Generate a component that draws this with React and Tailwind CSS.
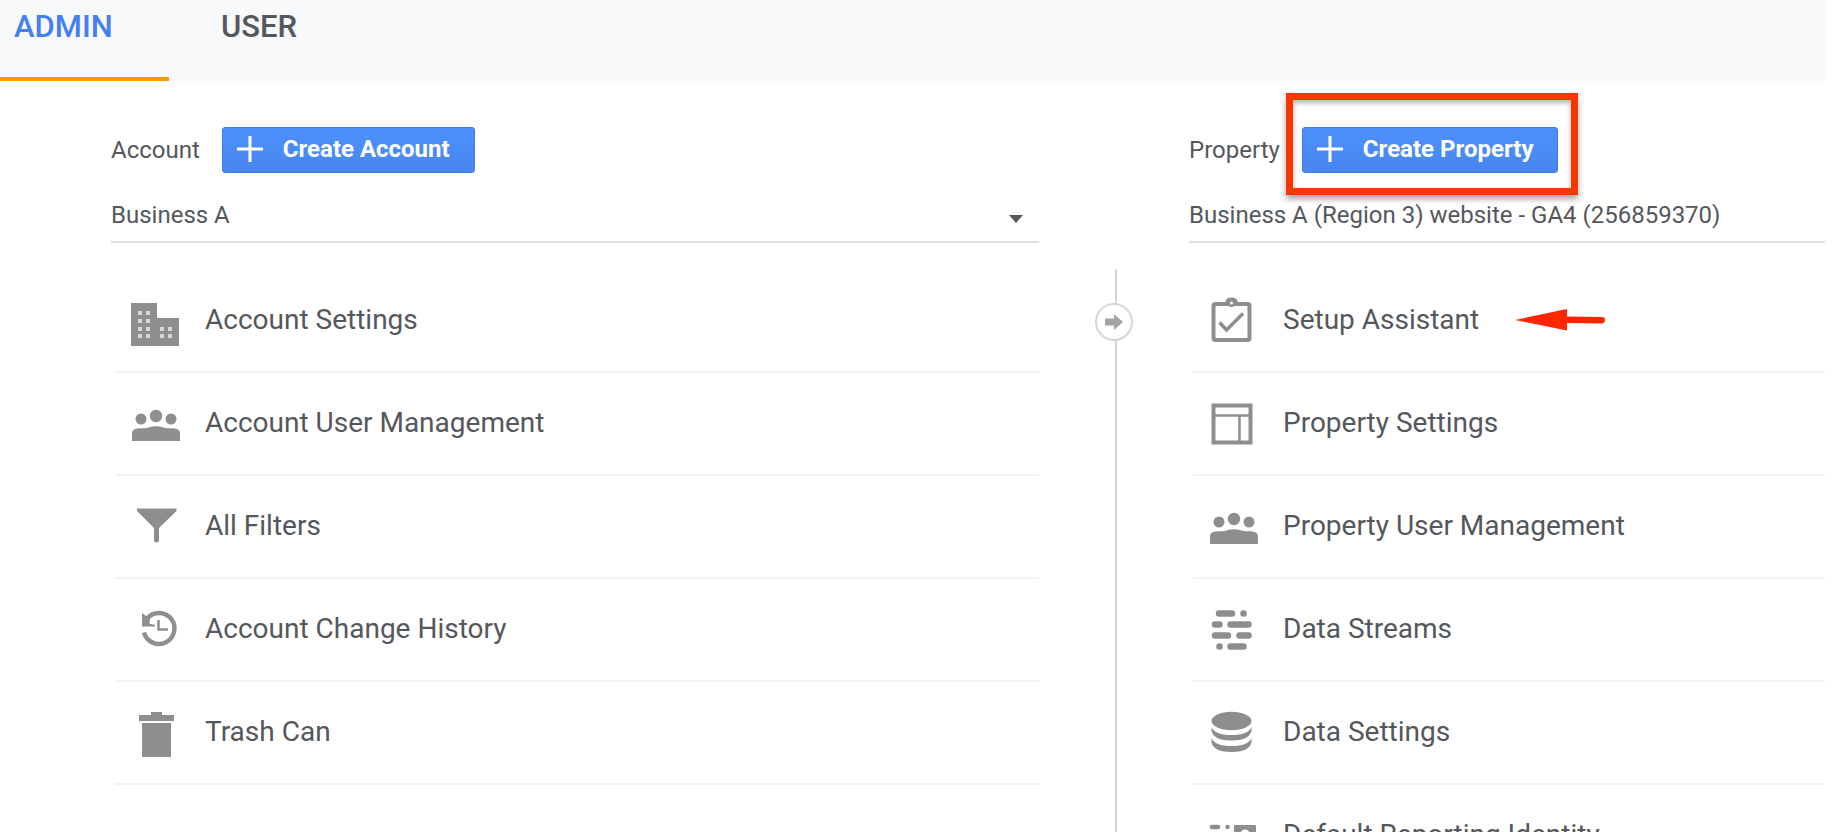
import React from 'react';

const ICONS = {
    building: (
        <svg viewBox="0 0 60 60" className="size-[60px]" fill="#8e8e8e">
            <path fill="#d6d6d6" d="M10 19H28V50H10ZM32 34H50V50H32Z" />
            <path fillRule="evenodd" d="M6 13H32V28H54V56H6ZM13 21v4h4v-4zM21 21v4h4v-4zM13 29v4h4v-4zM21 29v4h4v-4zM13 37v4h4v-4zM21 37v4h4v-4zM13 44v4h4v-4zM21 44v4h4v-4zM35 37v4h4v-4zM43 37v4h4v-4zM35 44v4h4v-4zM43 44v4h4v-4z" />
        </svg>
    ),
    people: (
        <svg viewBox="0 0 60 60" className="size-[60px]" fill="#8e8e8e">
            <circle cx="16" cy="26" r="5.5" />
            <circle cx="31" cy="23" r="6.2" />
            <circle cx="46" cy="26" r="5.5" />
            <path d="M7 48V40Q7 35 17 35.300Q22 35.500 24 34.300Q31 32 38 34.300Q40 35.500 45 35.300Q55 35 55 40V48Z" />
        </svg>
    ),
    filter: (
        <svg viewBox="0 0 60 60" className="size-[60px]" fill="#8e8e8e">
            <path d="M12 12.500H51.500V15L34 32V45Q31.500 48 29 45V32L12 15Z" />
        </svg>
    ),
    history: (
        <svg viewBox="0 0 60 60" className="size-[60px]" fill="none" stroke="#8e8e8e">
            <path strokeWidth="4.500" d="M19 33.500A15.500 15.500 0 1 0 22 19.500" />
            <path fill="#8e8e8e" stroke="none" d="M17 14L21 17L25 20.500L24.500 24.500L30 26V27.500H17Z" />
            <path strokeWidth="2.500" d="M33.500 21V30.500H43" />
        </svg>
    ),
    trash: (
        <svg viewBox="0 0 60 60" className="size-[60px]" fill="#8e8e8e">
            <path d="M14 13H26V10H37V13H49V19H14ZM17 21H46V55H17Z" />
        </svg>
    ),
    clipboard: (
        <svg viewBox="3 0 60 60" className="size-[60px]" fill="none" stroke="#8e8e8e">
            <rect x="13.500" y="14" width="36" height="36" rx="2" strokeWidth="4" />
            <path strokeWidth="3" d="M26.500 13Q27 9 31.500 9Q36 9 36.500 13" />
            <circle cx="31.500" cy="13" r="4" fill="#8e8e8e" stroke="none" />
            <circle cx="31.500" cy="13" r="1.500" fill="#fff" stroke="none" />
            <path strokeWidth="3.500" d="M19.500 32.500L26.500 40L43 23.500" />
        </svg>
    ),
    layout: (
        <svg viewBox="3 0 60 60" className="size-[60px]" fill="none" stroke="#8e8e8e">
            <rect x="13.500" y="12.500" width="37" height="37" strokeWidth="4" />
            <path strokeWidth="2.500" d="M13 22.500H50M39.500 22.500V50" />
        </svg>
    ),
    streams: (
        <svg viewBox="3 0 60 60" className="size-[60px]" stroke="#8e8e8e" strokeWidth="6.500" strokeLinecap="round">
            <path d="M19 14.500H32M43.500 14.500h.1M15 25.500H19.500M30.500 25.500H48.500M15 36.500H28M39.500 36.500H48.500M19.500 47.500h.1M30.500 47.500H43.500" />
        </svg>
    ),
    database: (
        <svg viewBox="3 0 60 60" className="size-[60px]" fill="#8e8e8e">
            <ellipse cx="31.500" cy="19" rx="20" ry="9.200" />
            <path d="M11.500 25Q15 33 31.500 33T51.500 25V29Q49 38.500 31.500 38.500T11.500 29ZM11.500 36Q15 44 31.500 44T51.500 36V40.500Q49 50 31.500 50T11.500 40.500Z" />
        </svg>
    ),
    identity: (
        <svg viewBox="0 0 60 60" className="size-[60px]" fill="none" stroke="#8e8e8e">
            <path strokeWidth="4.500" strokeLinecap="round" d="M9 22H15M24.500 22h.1M9 33H22M9 44H15" />
            <rect x="31" y="20" width="22" height="30" rx="1" fill="#8e8e8e" stroke="none" />
            <circle cx="42" cy="29" r="4.500" fill="#fff" stroke="none" />
        </svg>
    ),
};

const accountItems = [
    { label: 'Account Settings', icon: 'building' },
    { label: 'Account User Management', icon: 'people' },
    { label: 'All Filters', icon: 'filter' },
    { label: 'Account Change History', icon: 'history' },
    { label: 'Trash Can', icon: 'trash' },
];

const propertyItems = [
    { label: 'Setup Assistant', icon: 'clipboard', marked: true },
    { label: 'Property Settings', icon: 'layout' },
    { label: 'Property User Management', icon: 'people' },
    { label: 'Data Streams', icon: 'streams' },
    { label: 'Data Settings', icon: 'database' },
    { label: 'Default Reporting Identity', icon: 'identity' },
];

const RedArrow = () => (
    <svg viewBox="0 0 90 22" className="ml-9 h-[22px] w-[90px]" fill="#ff2600">
        <path d="M0 11L52 0V7.500L87 8Q90 8 90 11T87 14.500L52 14V21.500Z" />
    </svg>
);

const CreateButton = ({ children }) => (
    <button type="button" className="flex h-[46px] shrink-0 items-center rounded-[3px] border border-[#3b7ced] bg-linear-to-b from-[#4d90fe] to-[#4787ed] pr-6 pb-0.5 pl-[14px] text-[24px] leading-[28px] font-bold whitespace-nowrap text-white">
        <svg viewBox="0 0 26 26" className="mr-5 size-[26px]" stroke="#fff" strokeWidth="3">
            <path d="M0 13H26M13 0V26" />
        </svg>
        {children}
    </button>
);

const MenuList = ({ items }) => (
    <ul className="ml-1 pt-[27px]">
        {items.map((item) => (
            <li key={item.label} className="border-b-2 border-[#f3f3f3]">
                <a href="#" className="flex h-[101px] items-center pb-0.5 pl-2.5 text-[28px] leading-[32px] whitespace-nowrap">
                    <span className="mr-5 shrink-0">{ICONS[item.icon]}</span>
                    {item.label}
                    {item.marked && <RedArrow />}
                </a>
            </li>
        ))}
    </ul>
);

const App = () => {
    return (
        <div className="h-screen overflow-hidden bg-white pr-[9px] font-[Roboto,sans-serif] text-[#54585c]">
            <nav className="flex h-[81px] bg-[#f8f9fb] text-[31px] leading-[36px] font-medium">
                <a href="#" className="w-[169px] border-b-4 border-[#f90] pt-[9px] pl-[14px] text-[#4480f0]">ADMIN</a>
                <a href="#" className="pt-[9px] pl-[52px]">USER</a>
            </nav>

            <main className="flex pl-[111px]">
                <section className="min-w-0 flex-[928]">
                    <div className="flex h-[138px] items-center gap-[22px]">
                        <h2 className="text-[24px] leading-[28px]">Account</h2>
                        <CreateButton>Create Account</CreateButton>
                    </div>
                    <div className="relative -mt-[26px] border-b-2 border-[#dfdfdf]">
                        <select aria-label="Account" className="block h-12 w-full appearance-none bg-transparent pb-1 text-[24px] leading-[28px]">
                            <option>Business A</option>
                        </select>
                        <svg viewBox="0 0 14 8" className="absolute top-[22px] right-4 h-2 w-3.5" fill="#54585c">
                            <path d="M0 0H14L7 8Z" />
                        </svg>
                    </div>
                    <MenuList items={accountItems} />
                </section>

                <div className="mt-[188px] flex w-[150px] shrink-0 justify-center pl-1">
                    <div className="relative h-screen w-0.5 bg-[#d6d6d6]">
                        <button type="button" aria-label="Move" className="absolute top-[34px] -left-5 flex size-[38px] items-center justify-center rounded-full border-2 border-[#d6d6d6] bg-white">
                            <svg viewBox="0 0 18 16" className="h-4 w-[18px]" fill="#a3a3a3">
                                <path d="M0 4.500H9V0L18 8L9 16V11.500H0Z" />
                            </svg>
                        </button>
                    </div>
                </div>

                <section className="min-w-0 flex-[636]">
                    <div className="flex h-[138px] items-center gap-[22px]">
                        <h2 className="text-[24px] leading-[28px]">Property</h2>
                        <div className="relative">
                            <CreateButton>Create Property</CreateButton>
                            {/* highlight frame */}
                            <span className="pointer-events-none absolute -top-[34px] -right-5 -bottom-[22px] -left-4 border-[7px] border-[#fa3600] shadow-[0_4px_6px_rgba(0,0,0,0.35),inset_0_3px_5px_rgba(0,0,0,0.3)]" />
                        </div>
                    </div>
                    <div className="-mt-[26px] border-b-2 border-[#dfdfdf]">
                        <select aria-label="Property" className="block h-12 w-full appearance-none bg-transparent pb-1 text-[24px] leading-[28px]">
                            <option>Business A (Region 3) website - GA4 (256859370)</option>
                        </select>
                    </div>
                    <MenuList items={propertyItems} />
                </section>
            </main>
        </div>
    );
};

export default App;
